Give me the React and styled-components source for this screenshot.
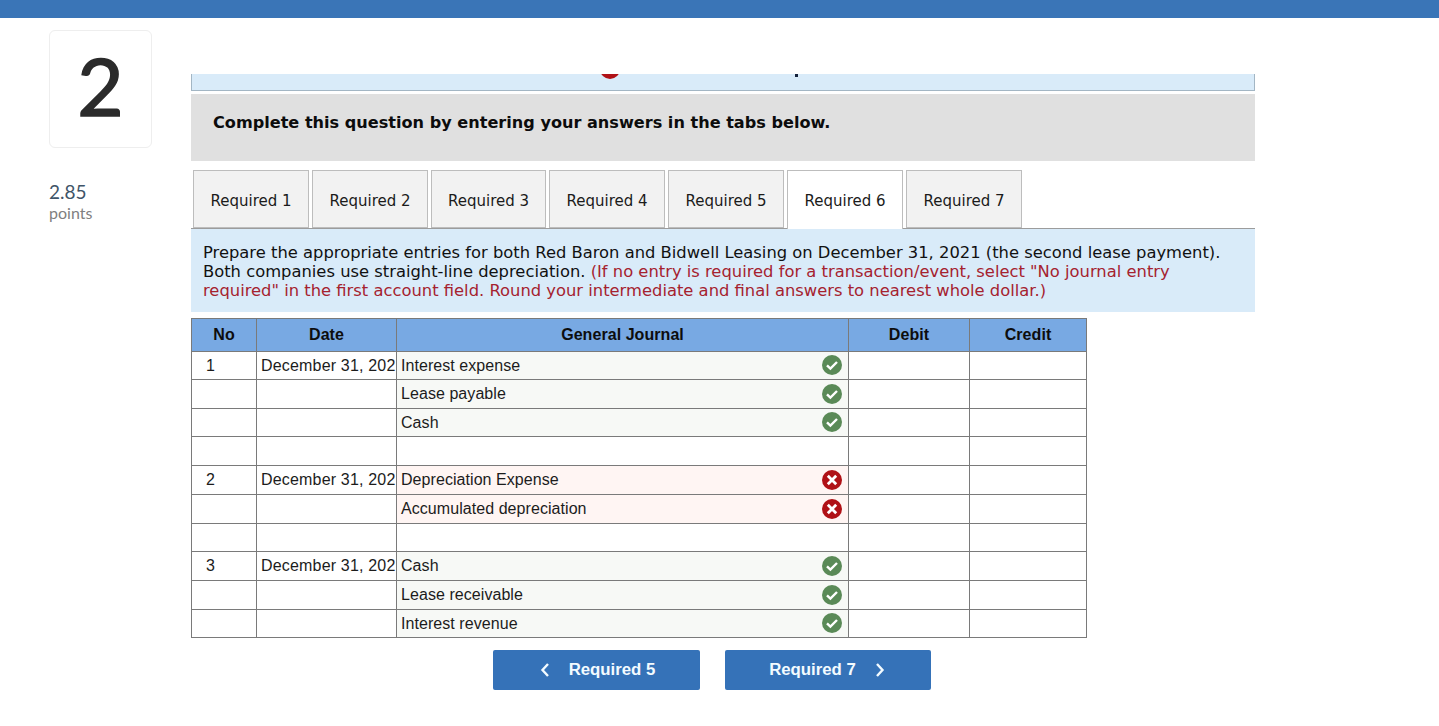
import React from 'react';
import styled, { createGlobalStyle } from 'styled-components';

const GlobalStyle = createGlobalStyle`
  html, body {
    margin: 0;
    padding: 0;
    background: #fff;
    overflow: hidden;
  }
`;

const TopBar = styled.div`
  height: 18px;
  background: #3a75b7;
`;

const Page = styled.div`
  display: flex;
  padding-left: 49px;
`;

const Side = styled.aside`
  width: 142px;
  flex: none;
  padding-top: 12px;
`;

const NumberCard = styled.div`
  box-sizing: border-box;
  width: 103px;
  height: 118px;
  padding-bottom: 8px;
  border: 1px solid #eeeeee;
  border-radius: 6px;
  display: flex;
  align-items: center;
  justify-content: center;
  font: 400 80px/1 Lato, sans-serif;
  color: #2b2b2b;
  -webkit-text-stroke: 1.5px #2b2b2b;
`;

const Points = styled.div`
  margin-top: 33px;
  font: 400 19px/22px Lato, sans-serif;
  color: #3f5468;
`;

const PointsLabel = styled.div`
  font: 400 16px/19px Lato, sans-serif;
  color: #808080;
`;

const Main = styled.main`
  width: 1064px;
  flex: none;
  padding-top: 56px;
`;

const ClippedNotice = styled.div`
  box-sizing: border-box;
  height: 17px;
  overflow: hidden;
  display: flex;
  align-items: flex-start;
  background: #d9ebf9;
  border-left: 1px solid #a3b6c4;
  border-right: 1px solid #a3b6c4;
  border-bottom: 1px solid #a3b6c4;
`;

const NoticeIcon = styled.span`
  flex: none;
  width: 20px;
  height: 20px;
  margin: -15px 0 0 408px;
  border-radius: 50%;
  background: #b01116;
`;

const NoticeTail = styled.span`
  flex: none;
  width: 3px;
  height: 3px;
  margin-left: 175px;
  background: #14213a;
`;

const Instruction = styled.div`
  box-sizing: border-box;
  height: 67px;
  margin-top: 3px;
  padding: 18px 22px 0;
  background: #e0e0e0;
  font: 700 16.12px/22px "DejaVu Sans", Verdana, sans-serif;
  color: #0c0c0c;
`;

const TabList = styled.div`
  display: flex;
  gap: 3px;
  height: 58px;
  margin-top: 9px;
  padding-left: 2px;
  border-bottom: 1px solid #9c9c9c;
`;

const Tab = styled.div`
  box-sizing: border-box;
  width: ${(p) => p.$width}px;
  height: ${(p) => (p.$active ? 59 : 58)}px;
  display: flex;
  align-items: center;
  justify-content: center;
  padding: 3px 0 ${(p) => (p.$active ? 1 : 0)}px;
  background: ${(p) => (p.$active ? '#fff' : '#f2f2f2')};
  border: 1px solid #bdbdbd;
  border-bottom: ${(p) => (p.$active ? '0' : '1px solid #bdbdbd')};
  font: 400 15px/20px "DejaVu Sans", Verdana, sans-serif;
  color: #1b1b1b;
  position: relative;
  z-index: ${(p) => (p.$active ? 1 : 0)};
`;

const Question = styled.div`
  box-sizing: border-box;
  height: 83px;
  padding: 14px 12px 0;
  background: #d9ebf9;
  font: 400 16.35px/19px "DejaVu Sans", Verdana, sans-serif;
  color: #111;
`;

const Hint = styled.span`
  color: #a5222f;
`;

const Journal = styled.table`
  width: 895px;
  margin-top: 6px;
  border-collapse: collapse;
  table-layout: fixed;
  font: 400 16px/20px "Liberation Sans", Arial, sans-serif;
  letter-spacing: 0.06px;
  color: #1c1c1c;

  th, td {
    box-sizing: border-box;
    border: 1px solid #7a7a7a;
    padding: 0;
  }
`;

const HeadCell = styled.th`
  height: 33px;
  background: #78a9e3;
  font-weight: 700;
  color: #0d0d0d;
`;

const Row = styled.tr`
  height: ${(p) => p.$height}px;
`;

const NoCell = styled.td`
  padding-left: 14px !important;
`;

const DateCell = styled.td`
  padding-left: 4px !important;
  white-space: nowrap;
  letter-spacing: 0.18px;
`;

const AccountCell = styled.td`
  background: ${(p) => (p.$status === 'ok' ? '#f7f9f6' : p.$status === 'bad' ? '#fff5f3' : '#fff')};
`;

const AccountInner = styled.div`
  display: flex;
  align-items: center;
  justify-content: space-between;
  padding: 0 6px 0 4px;
`;

const StatusMark = styled.svg`
  flex: none;
  margin-bottom: 1px;
`;

const Footer = styled.div`
  display: flex;
  gap: 25px;
  margin: 12px 0 0 302px;
`;

const NavButton = styled.button`
  width: ${(p) => p.$width}px;
  height: 40px;
  display: flex;
  align-items: center;
  justify-content: center;
  gap: 19px;
  padding: ${(p) => (p.$next ? '0 2px 0 0' : '0 0 0 2px')};
  border: 0;
  border-radius: 2px;
  background: #3572b8;
  font: 700 16.8px/20px "Liberation Sans", Arial, sans-serif;
  color: #f3fbff;
`;

const StatusIcon = ({ status }) => (
  <StatusMark width="20" height="20" viewBox="0 0 20 20" aria-hidden="true">
    <circle cx="10" cy="10" r="10" fill={status === 'ok' ? '#5a8a57' : '#b01116'} />
    {status === 'ok' ? (
      <path d="M5 10.3 8.4 13.6 15 7" fill="none" stroke="#fff" strokeWidth="2.4" />
    ) : (
      <path d="M5.8 5.8 14.2 14.2M14.2 5.8 5.8 14.2" fill="none" stroke="#fff" strokeWidth="2.8" />
    )}
  </StatusMark>
);

const Chevron = ({ left }) => (
  <svg width="10" height="16" viewBox="0 0 10 16" aria-hidden="true">
    <path
      d={left ? 'M8 2 2.5 8 8 14' : 'M2 2 7.5 8 2 14'}
      fill="none"
      stroke="#f3fbff"
      strokeWidth="2.4"
    />
  </svg>
);

const TABS = [116, 116, 115, 116, 116, 116, 116];

const ROWS = [
  { no: '1', date: 'December 31, 202', account: 'Interest expense', status: 'ok', height: 28 },
  { account: 'Lease payable', status: 'ok', height: 29 },
  { account: 'Cash', status: 'ok', height: 28 },
  { height: 29 },
  { no: '2', date: 'December 31, 202', account: 'Depreciation Expense', status: 'bad', height: 29 },
  { account: 'Accumulated depreciation', status: 'bad', height: 29 },
  { height: 28 },
  { no: '3', date: 'December 31, 202', account: 'Cash', status: 'ok', height: 29 },
  { account: 'Lease receivable', status: 'ok', height: 29 },
  { account: 'Interest revenue', status: 'ok', height: 28 },
];

export default function App() {
  return (
    <>
      <GlobalStyle />
      <TopBar />
      <Page>
        <Side>
          <NumberCard>2</NumberCard>
          <Points>2.85</Points>
          <PointsLabel>points</PointsLabel>
        </Side>
        <Main>
          <ClippedNotice>
            <NoticeIcon />
            <NoticeTail />
          </ClippedNotice>
          <Instruction>Complete this question by entering your answers in the tabs below.</Instruction>
          <TabList>
            {TABS.map((width, i) => (
              <Tab key={i} $width={width} $active={i === 5}>
                Required {i + 1}
              </Tab>
            ))}
          </TabList>
          <Question>
            Prepare the appropriate entries for both Red Baron and Bidwell Leasing on December 31, 2021 (the second
            lease payment). Both companies use straight-line depreciation.{' '}
            <Hint>
              (If no entry is required for a transaction/event, select "No journal entry required" in the first account
              field. Round your intermediate and final answers to nearest whole dollar.)
            </Hint>
          </Question>
          <Journal>
            <colgroup>
              <col width="65" />
              <col width="140" />
              <col width="452" />
              <col width="121" />
              <col width="117" />
            </colgroup>
            <thead>
              <tr>
                <HeadCell>No</HeadCell>
                <HeadCell>Date</HeadCell>
                <HeadCell>General Journal</HeadCell>
                <HeadCell>Debit</HeadCell>
                <HeadCell>Credit</HeadCell>
              </tr>
            </thead>
            <tbody>
              {ROWS.map((row, i) => (
                <Row key={i} $height={row.height}>
                  <NoCell>{row.no}</NoCell>
                  <DateCell>{row.date}</DateCell>
                  <AccountCell $status={row.status}>
                    <AccountInner>
                      <span>{row.account}</span>
                      {row.status && <StatusIcon status={row.status} />}
                    </AccountInner>
                  </AccountCell>
                  <td />
                  <td />
                </Row>
              ))}
            </tbody>
          </Journal>
          <Footer>
            <NavButton $width={207}>
              <Chevron left />
              Required 5
            </NavButton>
            <NavButton $width={206} $next>
              Required 7
              <Chevron />
            </NavButton>
          </Footer>
        </Main>
      </Page>
    </>
  );
}
